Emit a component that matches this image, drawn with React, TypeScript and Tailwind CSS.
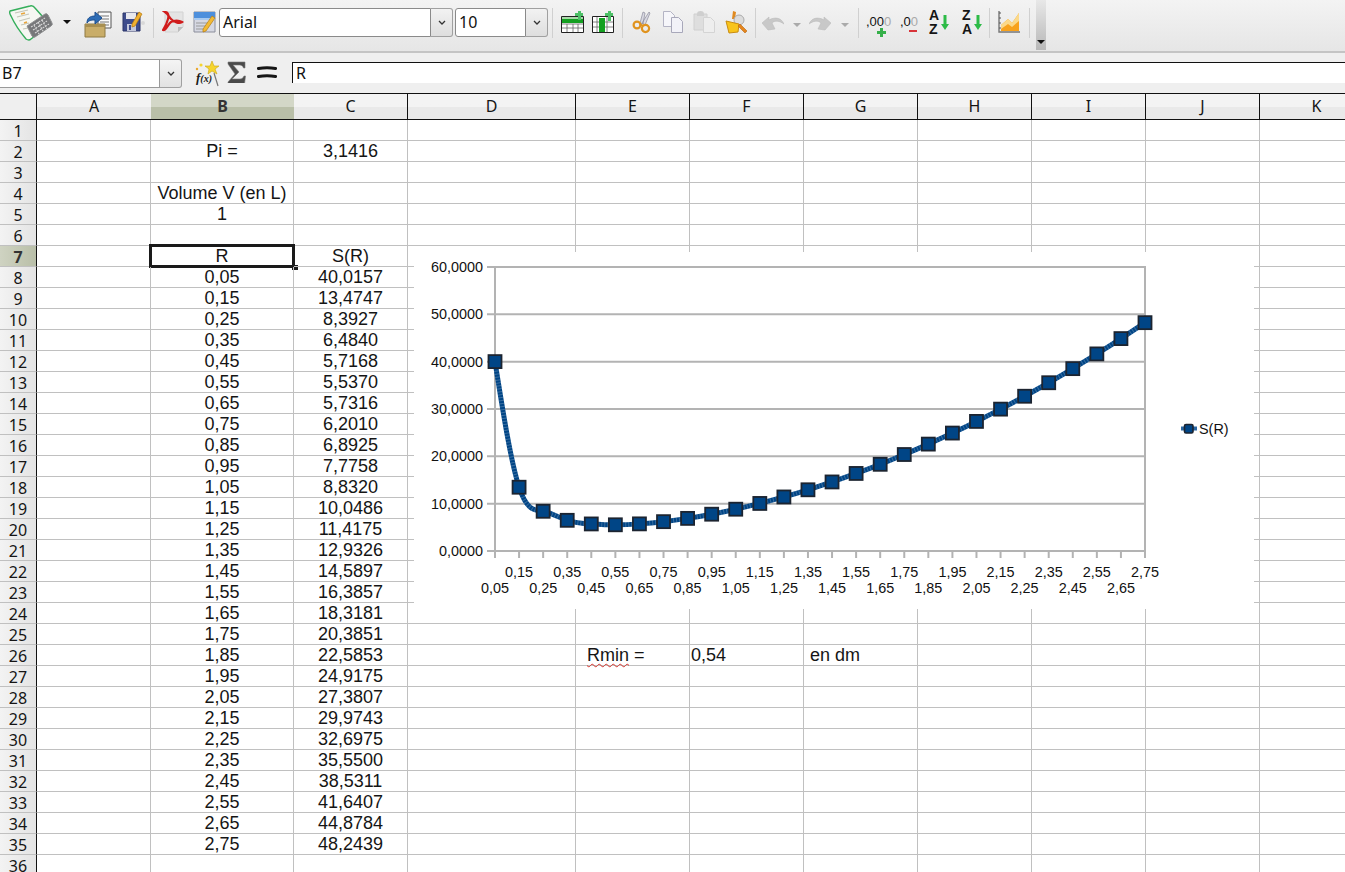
const rValues = ['0,05','0,15','0,25','0,35','0,45','0,55','0,65','0,75','0,85','0,95','1,05','1,15','1,25','1,35','1,45','1,55','1,65','1,75','1,85','1,95','2,05','2,15','2,25','2,35','2,45','2,55','2,65','2,75'];
const sValues = ['40,0157','13,4747','8,3927','6,4840','5,7168','5,5370','5,7316','6,2010','6,8925','7,7758','8,8320','10,0486','11,4175','12,9326','14,5897','16,3857','18,3181','20,3851','22,5853','24,9175','27,3807','29,9743','32,6975','35,5500','38,5311','41,6407','44,8784','48,2439'];
const columns = ['A','B','C','D','E','F','G','H','I','J','K'];
const rowNumbers = Array.from({ length: 36 }, (_, i) => i + 1);

const px = (i: number) => 495 + (650 / 27) * i;
const py = (v: number) => 551 - v * 4.733;
const points = sValues.map((s, i) => ({ x: px(i), y: py(parseFloat(s.replace(',', '.'))) }));

function curvePath() {
  // natural cubic spline, the way the chart engine smooths the line
  const n = points.length - 1;
  const h = 650 / 27;
  const c = new Array(n + 1).fill(0);
  const u = new Array(n + 1).fill(0);
  const z = new Array(n + 1).fill(0);
  for (let i = 1; i < n; i++) {
    const d = (3 / h) * (points[i + 1].y - points[i].y) - (3 / h) * (points[i].y - points[i - 1].y);
    const l = 4 * h - h * u[i - 1];
    u[i] = h / l;
    z[i] = (d - h * z[i - 1]) / l;
  }
  for (let j = n - 1; j > 0; j--) c[j] = z[j] - u[j] * c[j + 1];
  let d = `M${points[0].x} ${points[0].y}`;
  for (let i = 0; i < n; i++) {
    const a = points[i], e = points[i + 1];
    const m0 = (e.y - a.y) / h - (h * (2 * c[i] + c[i + 1])) / 3;
    const m1 = m0 + h * (c[i] + c[i + 1]);
    d += ` C${a.x + h / 3} ${a.y + (m0 * h) / 3} ${e.x - h / 3} ${e.y - (m1 * h) / 3} ${e.x} ${e.y}`;
  }
  return d;
}

function Sep() {
  return <div className="w-px h-[30px] mt-2 bg-[#d0d0d0] shrink-0" />;
}

function DropArrow({ color = '#111', className = '' }: { color?: string; className?: string }) {
  return (
    <svg width="8" height="4" viewBox="0 0 8 4" className={`shrink-0 ${className}`}>
      <path d="M0 0h8L4 4z" fill={color} />
    </svg>
  );
}

function CalcLogo() {
  return (
    <svg width="44" height="36" viewBox="0 0 44 36" className="shrink-0 mt-[5px]">
      <path d="M1 6 L21 1 Q24 0 26 3 L41 20 L22 34 Q20 36 17 34 Q7 22 2 11 Q0 8 1 6z" fill="#f6f7f2" stroke="#35ae5b" strokeWidth="1.4" />
      <path d="M6 8l13-3M8 12l12-3M10 16l11-3M12 20l8-2M14 24l5-1" stroke="#c3c6b8" strokeWidth="1.2" />
      <path d="M12 9l4-1M15 18l3-1" stroke="#e8a53a" strokeWidth="1.6" />
      <path d="M18 21 L36 9 Q38 8 39 10 L43 18 Q44 20 42 21 L26 32 Q24 33 23 31z" fill="#77787a" stroke="#8f9091" />
      <path d="M22 22l14-9M24 25l14-9M26 28l14-9M25 20l5 9M29 17l5 9M33 15l5 9" stroke="#d7d7d7" strokeWidth="1.1" strokeDasharray="2 1" />
    </svg>
  );
}

function OpenIcon() {
  return (
    <svg width="28" height="27" viewBox="0 0 28 27" className="shrink-0 mt-[11px]">
      <path d="M14 1h13v16H14z" fill="#fafafa" stroke="#555" />
      <path d="M16 5h9M16 8h9M16 11h9M16 14h9" stroke="#777" />
      <path d="M1 13h20v13H1z" fill="#c9ad69" stroke="#8f7a44" />
      <path d="M1 13h20v3H1z" fill="#a88f50" />
      <path d="M3 12c0-5 3-7 8-7V1l7 6-7 6V9c-3 0-6 0-8 3z" fill="#2d6cb5" stroke="#1d4f8f" />
    </svg>
  );
}

function SaveIcon() {
  return (
    <svg width="24" height="21" viewBox="0 0 24 21" className="shrink-0 mt-[11px]">
      <circle cx="21" cy="12" r="2" fill="#d8d8d8" />
      <path d="M1 2h17v18H1z" fill="#3e4c8c" stroke="#2a3468" />
      <path d="M4 2h10v6H4z" fill="#e8e8ee" />
      <path d="M5 13h9v7H5z" fill="#c4c8dc" />
      <path d="M7 14h2v5H7z" fill="#3e4c8c" />
      <path d="M10 13L17 1l3 2-7 12-3 1z" fill="#f0b030" stroke="#b87a10" strokeWidth=".7" />
    </svg>
  );
}

function PdfIcon() {
  return (
    <svg width="22" height="22" viewBox="0 0 22 22" className="shrink-0 mt-[11px]">
      <path d="M3 1h18v15l-5 5H3z" fill="#e4e4e4" stroke="#d2d2d2" />
      <path d="M16 21v-5h5z" fill="#bcbcbc" />
      <path d="M3 1c3 0 4 3 3 7-1 4-3 8-5 11 3 1 5-6 8-8 3-2 8-2 11 0-3 2-8 0-11-3C7 6 6 3 3 1z" fill="none" stroke="#d01c1c" strokeWidth="2.2" />
    </svg>
  );
}

function FormIcon() {
  return (
    <svg width="23" height="22" viewBox="0 0 23 22" className="shrink-0 mt-[11px]">
      <path d="M1 1h21v20H1z" fill="#d6d8e2" stroke="#8b8e9b" />
      <path d="M1 1h21v6H1z" fill="#4d8fdc" />
      <path d="M1 7h21v2H1z" fill="#a7c9ef" />
      <path d="M3 12h11M3 15h11M3 18h11" stroke="#9a9a9a" />
      <path d="M10 18L19 5l3 2-9 13-3 1z" fill="#f2ba34" stroke="#b67d14" strokeWidth=".7" />
    </svg>
  );
}

function Combo({ value, width }: { value: string; width: string }) {
  return (
    <div className={`flex h-[29px] mt-[8px] shrink-0 ${width}`}>
      <div className="flex-1 bg-white border border-[#8a8a8a] rounded-l-[3px] pl-[3px] leading-[26px] text-[16px] text-[#111] font-['Noto_Sans','Open_Sans',sans-serif]">{value}</div>
      <div className="w-[22px] flex items-center justify-center border border-l-0 border-[#a0a0a0] rounded-r-[3px] bg-gradient-to-b from-[#f2f2f2] to-[#dedede]">
        <svg width="8" height="5" viewBox="0 0 8 5"><path d="M1 1l3 3 3-3" fill="none" stroke="#333" strokeWidth="1.3" /></svg>
      </div>
    </div>
  );
}

function InsertRowIcon() {
  return (
    <svg width="23" height="23" viewBox="0 0 23 23" className="shrink-0 mt-[11px]">
      <path d="M.5 5.500h22v16H.5z" fill="#fff" stroke="#222" />
      <path d="M1 6h21v3H1z" fill="#a9d8a9" />
      <path d="M1 13h21M1 17h21M6 13v8M12 13v8M17 13v8" stroke="#666" strokeWidth=".8" />
      <path d="M1 8h21v4H1z" fill="#14a021" />
      <path d="M14 2h3V0h3v2h2v3h-2v4h-3V5h-3z" fill="#4cc066" />
    </svg>
  );
}

function InsertColIcon() {
  return (
    <svg width="23" height="23" viewBox="0 0 23 23" className="shrink-0 mt-[11px]">
      <path d="M.5 5.500h21v16H.5z" fill="#fff" stroke="#222" />
      <path d="M1 11h20M1 16h20M5 6v15M15 6v15" stroke="#666" strokeWidth=".8" />
      <path d="M7 7h6v14H7z" fill="#14a021" />
      <path d="M13 2h3V0h3v2h2v3h-2v5h-3V5h-3z" fill="#4cc066" />
    </svg>
  );
}

function ScissorsIcon() {
  return (
    <svg width="21" height="23" viewBox="0 0 21 23" className="shrink-0 mt-[11px]">
      <path d="M8 12L11 1l2 1-2 11zM10 12L17 1l1 1-5 12z" fill="#d8d8e2" stroke="#8b8b9b" strokeWidth=".7" />
      <circle cx="5" cy="14" r="3.400" fill="none" stroke="#e0931e" strokeWidth="2.200" />
      <circle cx="13.500" cy="17.500" r="3.600" fill="none" stroke="#e0931e" strokeWidth="2.200" />
      <path d="M8 13l3 2" stroke="#e0931e" strokeWidth="2" />
    </svg>
  );
}

function CopyIcon() {
  return (
    <svg width="21" height="23" viewBox="0 0 21 23" className="shrink-0 mt-[11px]">
      <path d="M.5.500h7l4 4v11H.5z" fill="#f6f6fa" stroke="#b4b4c4" />
      <path d="M8.500 6.500h7l4 4v11h-11z" fill="#f2f2f8" stroke="#a8a8ba" />
    </svg>
  );
}

function PasteIcon() {
  return (
    <svg width="22" height="23" viewBox="0 0 22 23" className="shrink-0 mt-[11px]">
      <path d="M1 3h13v16H1z" fill="#dedede" stroke="#d0d0d0" />
      <path d="M4 3q0-3 3.500-3T11 3v2H4z" fill="#cfcfcf" />
      <path d="M10.500 6.500h7l4 4v11h-11z" fill="#eeeeee" stroke="#d4d4d4" />
    </svg>
  );
}

function PaintIcon() {
  return (
    <svg width="23" height="23" viewBox="0 0 23 23" className="shrink-0 mt-[11px]">
      <path d="M8 0l3 1-1 7-3 0z" fill="#e08a20" />
      <circle cx="14" cy="9" r="5" fill="#dcdcdc" stroke="#aaa" />
      <path d="M1 10l13 3-1 8-9 1z" fill="#f8c41c" stroke="#c98c10" />
      <path d="M15 13l7 7-2 2-7-7z" fill="#e4851e" stroke="#b8660e" strokeWidth=".6" />
    </svg>
  );
}

function UndoIcon({ flip = false }: { flip?: boolean }) {
  return (
    <svg width="22" height="17" viewBox="0 0 22 17" className={`shrink-0 mt-[14px] ${flip ? '-scale-x-100' : ''}`}>
      <path d="M0 9l7-6v3c5-3 12-3 15 4-4-3-9-4-12-1l3 6-7 1z" fill="#c8c8c8" stroke="#bcbcbc" strokeWidth=".6" />
    </svg>
  );
}

function DecimalIcon({ label, faded, add }: { label: string; faded: string; add: boolean }) {
  return (
    <div className={`relative shrink-0 h-[26px] mt-[13px] font-['Liberation_Sans',sans-serif] text-[13px] leading-[18px] text-[#111] whitespace-nowrap ${add ? 'w-[24px]' : 'w-[18px]'}`}>
      {label}<span className="text-[#aaa]">{faded}</span>
      {add ? (
        <svg width="9" height="9" viewBox="0 0 9 9" className="absolute left-[11px] top-[15px]">
          <path d="M3 0h3v3h3v3H6v3H3V6H0V3h3z" fill="#36b04a" />
        </svg>
      ) : (
        <div className="absolute left-[9px] top-[17px] w-[8px] h-[2px] bg-[#d8343a]" />
      )}
    </div>
  );
}

function SortIcon({ top, bottom }: { top: string; bottom: string }) {
  return (
    <div className="relative shrink-0 w-[20px] h-[26px] mt-[10px] font-['Liberation_Sans',sans-serif] text-[14px] leading-[11px] font-bold text-[#151515]">
      <div className="h-[11px]">{top}</div>
      <div className="h-[11px] mt-[3px]">{bottom}</div>
      <svg width="8" height="15" viewBox="0 0 8 15" className="absolute left-[12px] top-[5px]">
        <path d="M2.500 0h3v9H8l-4 6-4-6h2.500z" fill="#2dbb47" />
      </svg>
    </div>
  );
}

function ChartIcon() {
  return (
    <svg width="23" height="24" viewBox="0 0 23 24" className="shrink-0 mt-[10px]">
      <path d="M1 1v21h21" fill="none" stroke="#777" strokeWidth="1.400" />
      <path d="M1 3h2M1 8h2M1 13h2M1 18h2" stroke="#555" />
      <path d="M3 15l7-6 4 4 7-10v18H3z" fill="#f7a21e" />
      <path d="M3 15l7-6 4 4 7-10v8l-7 6-4-3-7 5z" fill="#fbd98a" />
    </svg>
  );
}

function Toolbar() {
  return (
    <div className="flex h-[53px] pl-[9px] border-b-2 border-[#c4c4c4] bg-gradient-to-b from-[#f3f3f3] to-[#e6e6e6]">
      <CalcLogo />
      <DropArrow className="ml-[10px] mt-[20px]" />
      <div className="ml-[13px] flex">
        <OpenIcon />
      </div>
      <div className="ml-[10px] flex"><SaveIcon /></div>
      <div className="ml-[7px]"><Sep /></div>
      <div className="ml-[8px]"><PdfIcon /></div>
      <div className="ml-[9px]"><FormIcon /></div>
      <div className="ml-[3px] flex"><Combo value="Arial" width="w-[234px]" /></div>
      <div className="ml-[2px] flex"><Combo value="10" width="w-[93px]" /></div>
      <div className="ml-[4px]"><Sep /></div>
      <div className="ml-[8px]"><InsertRowIcon /></div>
      <div className="ml-[8px]"><InsertColIcon /></div>
      <div className="ml-[7px]"><Sep /></div>
      <div className="ml-[9px]"><ScissorsIcon /></div>
      <div className="ml-[10px]"><CopyIcon /></div>
      <div className="ml-[9px]"><PasteIcon /></div>
      <div className="ml-[10px]"><PaintIcon /></div>
      <div className="ml-[7px]"><Sep /></div>
      <div className="ml-[6px]"><UndoIcon /></div>
      <DropArrow color="#aaa" className="ml-[9px] mt-[23px]" />
      <div className="ml-[8px]"><UndoIcon flip /></div>
      <DropArrow color="#aaa" className="ml-[10px] mt-[23px]" />
      <div className="ml-[9px]"><Sep /></div>
      <div className="ml-[7px]"><DecimalIcon label=",00" faded="0" add /></div>
      <div className="ml-[10px]"><DecimalIcon label=",0" faded="0" add={false} /></div>
      <div className="ml-[11px]"><SortIcon top="A" bottom="Z" /></div>
      <div className="ml-[13px]"><SortIcon top="Z" bottom="A" /></div>
      <div className="ml-[7px]"><Sep /></div>
      <div className="ml-[8px]"><ChartIcon /></div>
      <div className="ml-[8px]"><Sep /></div>
      <div className="ml-[6px] w-[10px] h-[50px] flex items-end justify-center pb-[6px] bg-gradient-to-b from-[#e8e8e8] to-[#b8b8b8]">
        <DropArrow />
      </div>
    </div>
  );
}

function FormulaBar() {
  return (
    <div className="flex h-[40px] bg-[#efefef]">
      <div className="flex h-[29px] mt-[6px] w-[182px] shrink-0">
        <div className="flex-1 bg-white border border-l-0 border-[#9a9a9a] leading-[27px] text-[16px] pl-[2px] text-[#111] font-['Noto_Sans','Open_Sans',sans-serif]">B7</div>
        <div className="w-[22px] flex items-center justify-center border border-l-0 border-[#a0a0a0] rounded-r-[3px] bg-gradient-to-b from-[#f4f4f4] to-[#e2e2e2]">
          <svg width="8" height="5" viewBox="0 0 8 5"><path d="M1 1l3 3 3-3" fill="none" stroke="#333" strokeWidth="1.3" /></svg>
        </div>
      </div>
      <div className="relative w-[25px] h-[27px] ml-[13px] mt-[7px] shrink-0">
        <svg width="25" height="27" viewBox="0 0 25 27" className="absolute left-0 top-0">
          <path d="M17 1l2 5 5 0-4 3 2 5-5-3-4 3 1-5-4-3 5 0z" fill="#f6d52e" stroke="#c9a412" strokeWidth=".6" />
          <circle cx="6" cy="5" r="1.6" fill="#f6d52e" />
          <circle cx="2" cy="9" r="1.2" fill="#e9a82e" />
          <path d="M19 13l4 13" stroke="#777" strokeWidth="1.2" />
        </svg>
        <span className="absolute left-[1px] top-[10px] font-['Liberation_Serif',serif] italic font-bold text-[13px] leading-[16px] text-[#1a1a1a] whitespace-nowrap">f<span className="text-[10px]">(x)</span></span>
      </div>
      <div className="w-[20px] ml-[7px] mt-[8px] shrink-0">
        <svg width="20" height="22" viewBox="0 0 20 22">
          <path d="M1 1h17v6h-1.500c-.5-2-2-3-4-3H6l6 7-7 7h8c2 0 3-1 4-3h1.500l-1 8H1v-2l7-8L1 3z" fill="#4a4a4a" stroke="#777" strokeWidth=".6" />
        </svg>
      </div>
      <div className="w-[20px] ml-[10px] mt-[13px] shrink-0">
        <svg width="20" height="13" viewBox="0 0 20 13">
          <path d="M1.500 2.500Q10 1 18.500 2.500M1.500 10.500Q10 9 18.500 10.500" fill="none" stroke="#151515" strokeWidth="3.200" strokeLinecap="round" />
        </svg>
      </div>
      <div className="flex-1 ml-[15px] mt-[9px] h-[21px] bg-white border-t border-l border-[#111] border-b-[#e6e6e6] leading-[21px] pl-[3px] text-[16px] text-[#111] font-['Noto_Sans','Open_Sans',sans-serif] box-border">R</div>
    </div>
  );
}

function Chart() {
  const gridLevels = [60, 50, 40, 30, 20, 10, 0];
  const yLabels = ['60,0000', '50,0000', '40,0000', '30,0000', '20,0000', '10,0000', '0,0000'];
  return (
    <div className="absolute left-[414px] top-[159px] w-[840px] h-[357px] bg-white">
      <svg width="840" height="357" viewBox="414 252 840 357" className="font-['Liberation_Sans',sans-serif]">
        {gridLevels.map((v) => (
          <line key={v} x1="487" x2="1145" y1={py(v)} y2={py(v)} stroke="#b3b3b3" strokeWidth="2" />
        ))}
        <line x1="495" x2="495" y1="267" y2="558" stroke="#b3b3b3" strokeWidth="2" />
        <line x1="1145" x2="1145" y1="266" y2="558" stroke="#b3b3b3" strokeWidth="2" />
        {points.map((p, i) => (
          <line key={i} x1={p.x} x2={p.x} y1="551" y2="558" stroke="#b3b3b3" strokeWidth="2" />
        ))}
        {yLabels.map((label, i) => (
          <text key={label} x="483" y={py(gridLevels[i]) + 5} textAnchor="end" fontSize="14.400" fill="#111">{label}</text>
        ))}
        {rValues.map((label, i) => (
          <text key={label} x={px(i)} y={i % 2 === 0 ? 593 : 577} textAnchor="middle" fontSize="14.400" fill="#111">{label}</text>
        ))}
        <path d={curvePath()} fill="none" stroke="#004586" strokeWidth="5" />
        <path d={curvePath()} fill="none" stroke="#ffffff" strokeOpacity=".22" strokeWidth="5" strokeDasharray="1 2" />
        {points.map((p, i) => (
          <rect key={i} x={p.x - 6.500} y={p.y - 6.500} width="13" height="13" fill="#004586" stroke="#1c2430" strokeWidth="1.800" />
        ))}
        <line x1="1181" x2="1197" y1="428.500" y2="428.500" stroke="#2a67a3" strokeWidth="4" />
        <rect x="1184.500" y="424.500" width="8.500" height="8.500" rx="1.500" fill="#004586" stroke="#1c2430" strokeWidth="1.600" />
        <text x="1199" y="434" fontSize="14.400" fill="#111">S(R)</text>
      </svg>
    </div>
  );
}

function cellText(row: number, col: string) {
  if (col === 'B') {
    if (row === 2) return 'Pi =';
    if (row === 4) return 'Volume V (en L)';
    if (row === 5) return '1';
    if (row === 7) return 'R';
    if (row >= 8 && row <= 35) return rValues[row - 8];
  }
  if (col === 'C') {
    if (row === 2) return '3,1416';
    if (row === 7) return 'S(R)';
    if (row >= 8 && row <= 35) return sValues[row - 8];
  }
  return null;
}

function Cell({ row, col }: { row: number; col: string }) {
  const text = cellText(row, col);
  return (
    <div className="relative border-r border-b border-[#c0c0c0] text-center whitespace-nowrap leading-[20px]">
      {text}
      {row === 26 && col === 'E' && (
        <div className="text-left pl-[11px]">
          <span className="underline decoration-wavy decoration-[#d4342c] decoration-1 underline-offset-2">Rmin</span> =
        </div>
      )}
      {row === 26 && col === 'F' && <div className="text-left pl-px">0,54</div>}
      {row === 26 && col === 'G' && <div className="text-left pl-[6px]">en dm</div>}
      {row === 7 && col === 'B' && (
        <div className="absolute -left-[2px] -top-[2px] w-[146px] h-[24px] border-[3px] border-[#1a1a1a]">
          <div className="absolute -right-[6px] -bottom-[5px] w-[6px] h-[5px] bg-[#1a1a1a]" />
        </div>
      )}
    </div>
  );
}

export default function App() {
  return (
    <div className="w-[1345px] h-[872px] overflow-hidden bg-white">
      <Toolbar />
      <FormulaBar />
      <div className="relative">
        <div className="grid grid-cols-[37px_114px_143px_114px_168px_114px_114px_114px_114px_114px_114px_114px] grid-rows-[27px] auto-rows-[21px] text-[18px] text-[#151515] font-['Liberation_Sans',Arial,sans-serif]">
          <div className="border-t border-b border-r border-[#111] bg-[#efefef]" />
          {columns.map((c) => (
            <div
              key={c}
              className={`border-t border-b border-[#111] text-center leading-[25px] text-[16px] font-['Noto_Sans','Open_Sans',sans-serif] ${
                c === 'B'
                  ? 'bg-gradient-to-b from-[#d3d7c7] from-50% to-[#b9bfa8] to-50% font-bold border-r-0 text-[#333]'
                  : c === 'A'
                    ? 'bg-gradient-to-b from-[#f3f3f3] from-50% to-[#e9e9e9] to-50%'
                    : 'bg-gradient-to-b from-[#f3f3f3] from-50% to-[#e9e9e9] to-50% border-r'
              }`}
            >
              {c}
            </div>
          ))}
          {rowNumbers.map((row) => (
            <div key={row} className="contents">
              <div
                className={`border-r border-r-[#111] border-b border-b-[#c0c0c0] text-center leading-[22px] text-[16px] font-['Noto_Sans','Open_Sans',sans-serif] ${
                  row === 7
                    ? 'bg-gradient-to-r from-[#cfd3c2] to-[#b9bfa8] font-bold text-[#333]'
                    : 'bg-gradient-to-r from-[#f3f3f3] to-[#e4e4e4]'
                }`}
              >
                {row}
              </div>
              {columns.map((c) => (
                <Cell key={c} row={row} col={c} />
              ))}
            </div>
          ))}
        </div>
        <Chart />
      </div>
    </div>
  );
}
